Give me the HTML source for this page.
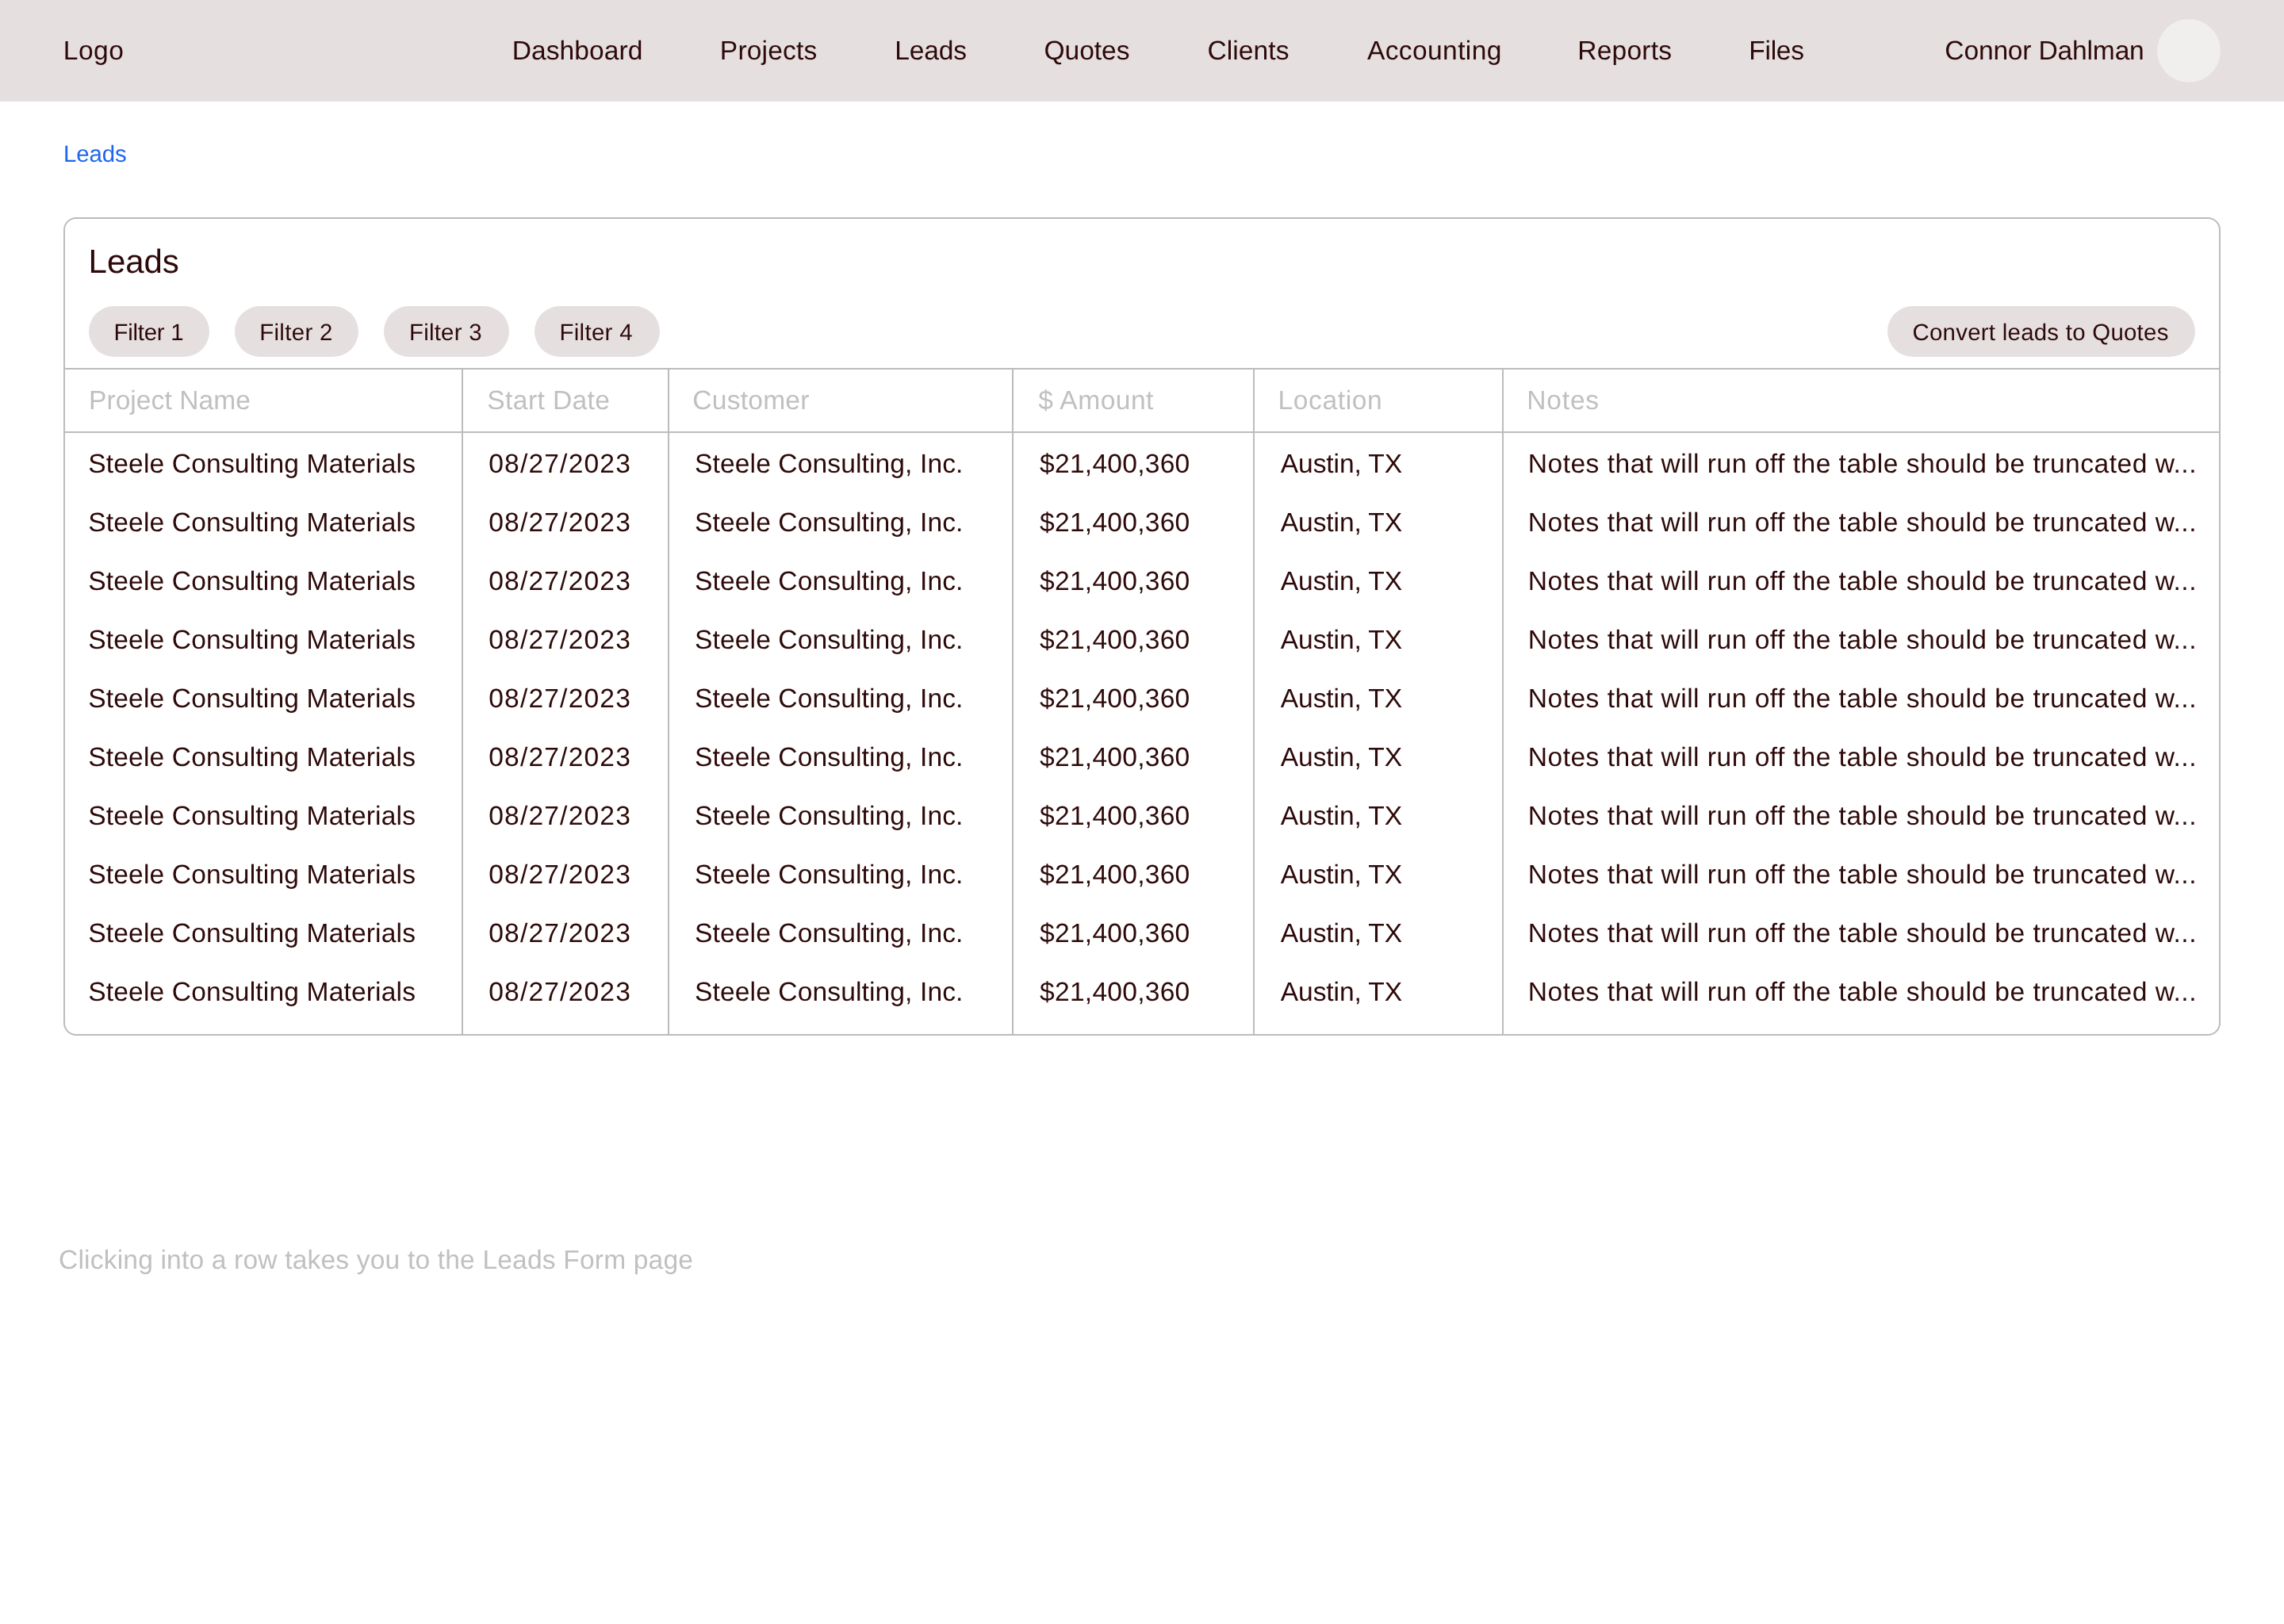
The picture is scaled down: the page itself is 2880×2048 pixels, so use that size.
<!DOCTYPE html><html lang="en"><head><meta charset="utf-8"><title>Leads</title>
<style>
*{margin:0;padding:0;box-sizing:border-box}
html,body{width:2880px;height:2048px;background:#fff;overflow:hidden}
body{position:relative;font-family:"Liberation Sans",sans-serif;font-weight:400;-webkit-font-smoothing:antialiased;text-rendering:geometricPrecision}
.page{position:absolute;left:0;top:0;width:2880px;height:2048px;will-change:transform}
.t{position:absolute;white-space:nowrap;font-weight:400;text-decoration:none;display:block}
header{position:absolute;left:0;top:0;width:2880px;height:128px;background:#e5dfdf}
.avatar{position:absolute;left:2720px;top:24px;width:80px;height:80px;border-radius:50%;background:#f0efed}
.card{position:absolute;left:80px;top:274px;width:2720px;height:1032px;border:2px solid #bcbcbc;border-radius:16px;background:#fff}
.pill{position:absolute;top:386px;height:64px;border-radius:32px;background:#e5dfdf;border:0;padding:0;font:inherit;text-rendering:inherit;letter-spacing:inherit;text-align:left;display:block;overflow:visible}
.hl{position:absolute;left:82px;width:2716px;height:2px;background:#bcbcbc}
.vl{position:absolute;top:466px;width:2px;height:838px;background:#bcbcbc}
</style></head><body><div class="page">
<header>
<span class="t" style="left:79.84px;top:44.00px;font-size:33.6px;line-height:42px;letter-spacing:0.473px;color:#2e0909;">Logo</span>
<nav>
<a class="t" style="left:645.64px;top:44.00px;font-size:33.6px;line-height:42px;letter-spacing:0.081px;color:#2e0909;">Dashboard</a>
<a class="t" style="left:907.84px;top:44.00px;font-size:33.6px;line-height:42px;letter-spacing:0.157px;color:#2e0909;">Projects</a>
<a class="t" style="left:1128.34px;top:44.00px;font-size:33.6px;line-height:42px;letter-spacing:-0.219px;color:#2e0909;">Leads</a>
<a class="t" style="left:1316.46px;top:44.00px;font-size:33.6px;line-height:42px;letter-spacing:-0.055px;color:#2e0909;">Quotes</a>
<a class="t" style="left:1522.49px;top:44.00px;font-size:33.6px;line-height:42px;letter-spacing:0.053px;color:#2e0909;">Clients</a>
<a class="t" style="left:1723.98px;top:44.00px;font-size:33.6px;line-height:42px;letter-spacing:0.360px;color:#2e0909;">Accounting</a>
<a class="t" style="left:1989.29px;top:44.00px;font-size:33.6px;line-height:42px;letter-spacing:0.179px;color:#2e0909;">Reports</a>
<a class="t" style="left:2205.29px;top:44.00px;font-size:33.6px;line-height:42px;letter-spacing:-0.305px;color:#2e0909;">Files</a>
</nav>
<span class="t" style="left:2452.34px;top:44.00px;font-size:33.6px;line-height:42px;letter-spacing:-0.182px;color:#2e0909;">Connor Dahlman</span>
<div class="avatar"></div>
</header>
<a class="t" style="left:79.94px;top:176.00px;font-size:29.4px;line-height:37px;letter-spacing:-0.057px;color:#1f65f0;">Leads</a>
<section class="card"></section>
<h1 class="t" style="left:111.62px;top:305.00px;font-size:42px;line-height:50px;letter-spacing:-0.060px;color:#2e0909;">Leads</h1>
<button class="pill" style="left:112px;width:152px"><span class="t" style="left:31.44px;top:15.00px;font-size:29.4px;line-height:37px;letter-spacing:-0.222px;color:#2e0909">Filter 1</span></button>
<button class="pill" style="left:296px;width:156px"><span class="t" style="left:31.19px;top:15.00px;font-size:29.4px;line-height:37px;letter-spacing:0.348px;color:#2e0909">Filter 2</span></button>
<button class="pill" style="left:484px;width:158px"><span class="t" style="left:31.94px;top:15.00px;font-size:29.4px;line-height:37px;letter-spacing:0.250px;color:#2e0909">Filter 3</span></button>
<button class="pill" style="left:674px;width:158px"><span class="t" style="left:31.44px;top:15.00px;font-size:29.4px;line-height:37px;letter-spacing:0.332px;color:#2e0909">Filter 4</span></button>
<button class="pill" style="left:2380px;width:388px"><span class="t" style="left:31.51px;top:15.00px;font-size:29.4px;line-height:37px;letter-spacing:0.269px;color:#2e0909">Convert leads to Quotes</span></button>
<div class="hl" style="top:464px"></div><div class="hl" style="top:544px"></div>
<div class="vl" style="left:582px"></div>
<div class="vl" style="left:842px"></div>
<div class="vl" style="left:1276px"></div>
<div class="vl" style="left:1580px"></div>
<div class="vl" style="left:1894px"></div>
<span class="t" style="left:111.94px;top:485.00px;font-size:33.6px;line-height:42px;letter-spacing:0.056px;color:#c0c0c0;">Project Name</span>
<span class="t" style="left:614.32px;top:485.00px;font-size:33.6px;line-height:42px;letter-spacing:0.389px;color:#c0c0c0;">Start Date</span>
<span class="t" style="left:873.29px;top:485.00px;font-size:33.6px;line-height:42px;letter-spacing:0.232px;color:#c0c0c0;">Customer</span>
<span class="t" style="left:1309.24px;top:485.00px;font-size:33.6px;line-height:42px;letter-spacing:0.478px;color:#c0c0c0;">$ Amount</span>
<span class="t" style="left:1611.44px;top:485.00px;font-size:33.6px;line-height:42px;letter-spacing:0.615px;color:#c0c0c0;">Location</span>
<span class="t" style="left:1925.24px;top:485.00px;font-size:33.6px;line-height:42px;letter-spacing:0.799px;color:#c0c0c0;">Notes</span>
<div class="r">
<span class="t" style="left:111.27px;top:565.00px;font-size:33.6px;line-height:42px;letter-spacing:0.151px;color:#2e0909">Steele Consulting Materials</span>
<span class="t" style="left:616.19px;top:565.00px;font-size:33.6px;line-height:42px;letter-spacing:1.181px;color:#2e0909">08/27/2023</span>
<span class="t" style="left:876.07px;top:565.00px;font-size:33.6px;line-height:42px;letter-spacing:0.109px;color:#2e0909">Steele Consulting, Inc.</span>
<span class="t" style="left:1311.04px;top:565.00px;font-size:33.6px;line-height:42px;letter-spacing:0.252px;color:#2e0909">$21,400,360</span>
<span class="t" style="left:1614.83px;top:565.00px;font-size:33.6px;line-height:42px;letter-spacing:-0.112px;color:#2e0909">Austin, TX</span>
<span class="t" style="left:1926.74px;top:565.00px;font-size:33.6px;line-height:42px;letter-spacing:0.486px;color:#2e0909">Notes that will run off the table should be truncated w...</span>
</div>
<div class="r">
<span class="t" style="left:111.27px;top:639.00px;font-size:33.6px;line-height:42px;letter-spacing:0.151px;color:#2e0909">Steele Consulting Materials</span>
<span class="t" style="left:616.19px;top:639.00px;font-size:33.6px;line-height:42px;letter-spacing:1.181px;color:#2e0909">08/27/2023</span>
<span class="t" style="left:876.07px;top:639.00px;font-size:33.6px;line-height:42px;letter-spacing:0.109px;color:#2e0909">Steele Consulting, Inc.</span>
<span class="t" style="left:1311.04px;top:639.00px;font-size:33.6px;line-height:42px;letter-spacing:0.252px;color:#2e0909">$21,400,360</span>
<span class="t" style="left:1614.83px;top:639.00px;font-size:33.6px;line-height:42px;letter-spacing:-0.112px;color:#2e0909">Austin, TX</span>
<span class="t" style="left:1926.74px;top:639.00px;font-size:33.6px;line-height:42px;letter-spacing:0.486px;color:#2e0909">Notes that will run off the table should be truncated w...</span>
</div>
<div class="r">
<span class="t" style="left:111.27px;top:713.00px;font-size:33.6px;line-height:42px;letter-spacing:0.151px;color:#2e0909">Steele Consulting Materials</span>
<span class="t" style="left:616.19px;top:713.00px;font-size:33.6px;line-height:42px;letter-spacing:1.181px;color:#2e0909">08/27/2023</span>
<span class="t" style="left:876.07px;top:713.00px;font-size:33.6px;line-height:42px;letter-spacing:0.109px;color:#2e0909">Steele Consulting, Inc.</span>
<span class="t" style="left:1311.04px;top:713.00px;font-size:33.6px;line-height:42px;letter-spacing:0.252px;color:#2e0909">$21,400,360</span>
<span class="t" style="left:1614.83px;top:713.00px;font-size:33.6px;line-height:42px;letter-spacing:-0.112px;color:#2e0909">Austin, TX</span>
<span class="t" style="left:1926.74px;top:713.00px;font-size:33.6px;line-height:42px;letter-spacing:0.486px;color:#2e0909">Notes that will run off the table should be truncated w...</span>
</div>
<div class="r">
<span class="t" style="left:111.27px;top:787.00px;font-size:33.6px;line-height:42px;letter-spacing:0.151px;color:#2e0909">Steele Consulting Materials</span>
<span class="t" style="left:616.19px;top:787.00px;font-size:33.6px;line-height:42px;letter-spacing:1.181px;color:#2e0909">08/27/2023</span>
<span class="t" style="left:876.07px;top:787.00px;font-size:33.6px;line-height:42px;letter-spacing:0.109px;color:#2e0909">Steele Consulting, Inc.</span>
<span class="t" style="left:1311.04px;top:787.00px;font-size:33.6px;line-height:42px;letter-spacing:0.252px;color:#2e0909">$21,400,360</span>
<span class="t" style="left:1614.83px;top:787.00px;font-size:33.6px;line-height:42px;letter-spacing:-0.112px;color:#2e0909">Austin, TX</span>
<span class="t" style="left:1926.74px;top:787.00px;font-size:33.6px;line-height:42px;letter-spacing:0.486px;color:#2e0909">Notes that will run off the table should be truncated w...</span>
</div>
<div class="r">
<span class="t" style="left:111.27px;top:861.00px;font-size:33.6px;line-height:42px;letter-spacing:0.151px;color:#2e0909">Steele Consulting Materials</span>
<span class="t" style="left:616.19px;top:861.00px;font-size:33.6px;line-height:42px;letter-spacing:1.181px;color:#2e0909">08/27/2023</span>
<span class="t" style="left:876.07px;top:861.00px;font-size:33.6px;line-height:42px;letter-spacing:0.109px;color:#2e0909">Steele Consulting, Inc.</span>
<span class="t" style="left:1311.04px;top:861.00px;font-size:33.6px;line-height:42px;letter-spacing:0.252px;color:#2e0909">$21,400,360</span>
<span class="t" style="left:1614.83px;top:861.00px;font-size:33.6px;line-height:42px;letter-spacing:-0.112px;color:#2e0909">Austin, TX</span>
<span class="t" style="left:1926.74px;top:861.00px;font-size:33.6px;line-height:42px;letter-spacing:0.486px;color:#2e0909">Notes that will run off the table should be truncated w...</span>
</div>
<div class="r">
<span class="t" style="left:111.27px;top:935.00px;font-size:33.6px;line-height:42px;letter-spacing:0.151px;color:#2e0909">Steele Consulting Materials</span>
<span class="t" style="left:616.19px;top:935.00px;font-size:33.6px;line-height:42px;letter-spacing:1.181px;color:#2e0909">08/27/2023</span>
<span class="t" style="left:876.07px;top:935.00px;font-size:33.6px;line-height:42px;letter-spacing:0.109px;color:#2e0909">Steele Consulting, Inc.</span>
<span class="t" style="left:1311.04px;top:935.00px;font-size:33.6px;line-height:42px;letter-spacing:0.252px;color:#2e0909">$21,400,360</span>
<span class="t" style="left:1614.83px;top:935.00px;font-size:33.6px;line-height:42px;letter-spacing:-0.112px;color:#2e0909">Austin, TX</span>
<span class="t" style="left:1926.74px;top:935.00px;font-size:33.6px;line-height:42px;letter-spacing:0.486px;color:#2e0909">Notes that will run off the table should be truncated w...</span>
</div>
<div class="r">
<span class="t" style="left:111.27px;top:1009.00px;font-size:33.6px;line-height:42px;letter-spacing:0.151px;color:#2e0909">Steele Consulting Materials</span>
<span class="t" style="left:616.19px;top:1009.00px;font-size:33.6px;line-height:42px;letter-spacing:1.181px;color:#2e0909">08/27/2023</span>
<span class="t" style="left:876.07px;top:1009.00px;font-size:33.6px;line-height:42px;letter-spacing:0.109px;color:#2e0909">Steele Consulting, Inc.</span>
<span class="t" style="left:1311.04px;top:1009.00px;font-size:33.6px;line-height:42px;letter-spacing:0.252px;color:#2e0909">$21,400,360</span>
<span class="t" style="left:1614.83px;top:1009.00px;font-size:33.6px;line-height:42px;letter-spacing:-0.112px;color:#2e0909">Austin, TX</span>
<span class="t" style="left:1926.74px;top:1009.00px;font-size:33.6px;line-height:42px;letter-spacing:0.486px;color:#2e0909">Notes that will run off the table should be truncated w...</span>
</div>
<div class="r">
<span class="t" style="left:111.27px;top:1083.00px;font-size:33.6px;line-height:42px;letter-spacing:0.151px;color:#2e0909">Steele Consulting Materials</span>
<span class="t" style="left:616.19px;top:1083.00px;font-size:33.6px;line-height:42px;letter-spacing:1.181px;color:#2e0909">08/27/2023</span>
<span class="t" style="left:876.07px;top:1083.00px;font-size:33.6px;line-height:42px;letter-spacing:0.109px;color:#2e0909">Steele Consulting, Inc.</span>
<span class="t" style="left:1311.04px;top:1083.00px;font-size:33.6px;line-height:42px;letter-spacing:0.252px;color:#2e0909">$21,400,360</span>
<span class="t" style="left:1614.83px;top:1083.00px;font-size:33.6px;line-height:42px;letter-spacing:-0.112px;color:#2e0909">Austin, TX</span>
<span class="t" style="left:1926.74px;top:1083.00px;font-size:33.6px;line-height:42px;letter-spacing:0.486px;color:#2e0909">Notes that will run off the table should be truncated w...</span>
</div>
<div class="r">
<span class="t" style="left:111.27px;top:1157.00px;font-size:33.6px;line-height:42px;letter-spacing:0.151px;color:#2e0909">Steele Consulting Materials</span>
<span class="t" style="left:616.19px;top:1157.00px;font-size:33.6px;line-height:42px;letter-spacing:1.181px;color:#2e0909">08/27/2023</span>
<span class="t" style="left:876.07px;top:1157.00px;font-size:33.6px;line-height:42px;letter-spacing:0.109px;color:#2e0909">Steele Consulting, Inc.</span>
<span class="t" style="left:1311.04px;top:1157.00px;font-size:33.6px;line-height:42px;letter-spacing:0.252px;color:#2e0909">$21,400,360</span>
<span class="t" style="left:1614.83px;top:1157.00px;font-size:33.6px;line-height:42px;letter-spacing:-0.112px;color:#2e0909">Austin, TX</span>
<span class="t" style="left:1926.74px;top:1157.00px;font-size:33.6px;line-height:42px;letter-spacing:0.486px;color:#2e0909">Notes that will run off the table should be truncated w...</span>
</div>
<div class="r">
<span class="t" style="left:111.27px;top:1231.00px;font-size:33.6px;line-height:42px;letter-spacing:0.151px;color:#2e0909">Steele Consulting Materials</span>
<span class="t" style="left:616.19px;top:1231.00px;font-size:33.6px;line-height:42px;letter-spacing:1.181px;color:#2e0909">08/27/2023</span>
<span class="t" style="left:876.07px;top:1231.00px;font-size:33.6px;line-height:42px;letter-spacing:0.109px;color:#2e0909">Steele Consulting, Inc.</span>
<span class="t" style="left:1311.04px;top:1231.00px;font-size:33.6px;line-height:42px;letter-spacing:0.252px;color:#2e0909">$21,400,360</span>
<span class="t" style="left:1614.83px;top:1231.00px;font-size:33.6px;line-height:42px;letter-spacing:-0.112px;color:#2e0909">Austin, TX</span>
<span class="t" style="left:1926.74px;top:1231.00px;font-size:33.6px;line-height:42px;letter-spacing:0.486px;color:#2e0909">Notes that will run off the table should be truncated w...</span>
</div>
<p class="t" style="left:74.09px;top:1569.00px;font-size:33.6px;line-height:42px;letter-spacing:0.167px;color:#c0c0c0;">Clicking into a row takes you to the Leads Form page</p>
</div></body></html>
